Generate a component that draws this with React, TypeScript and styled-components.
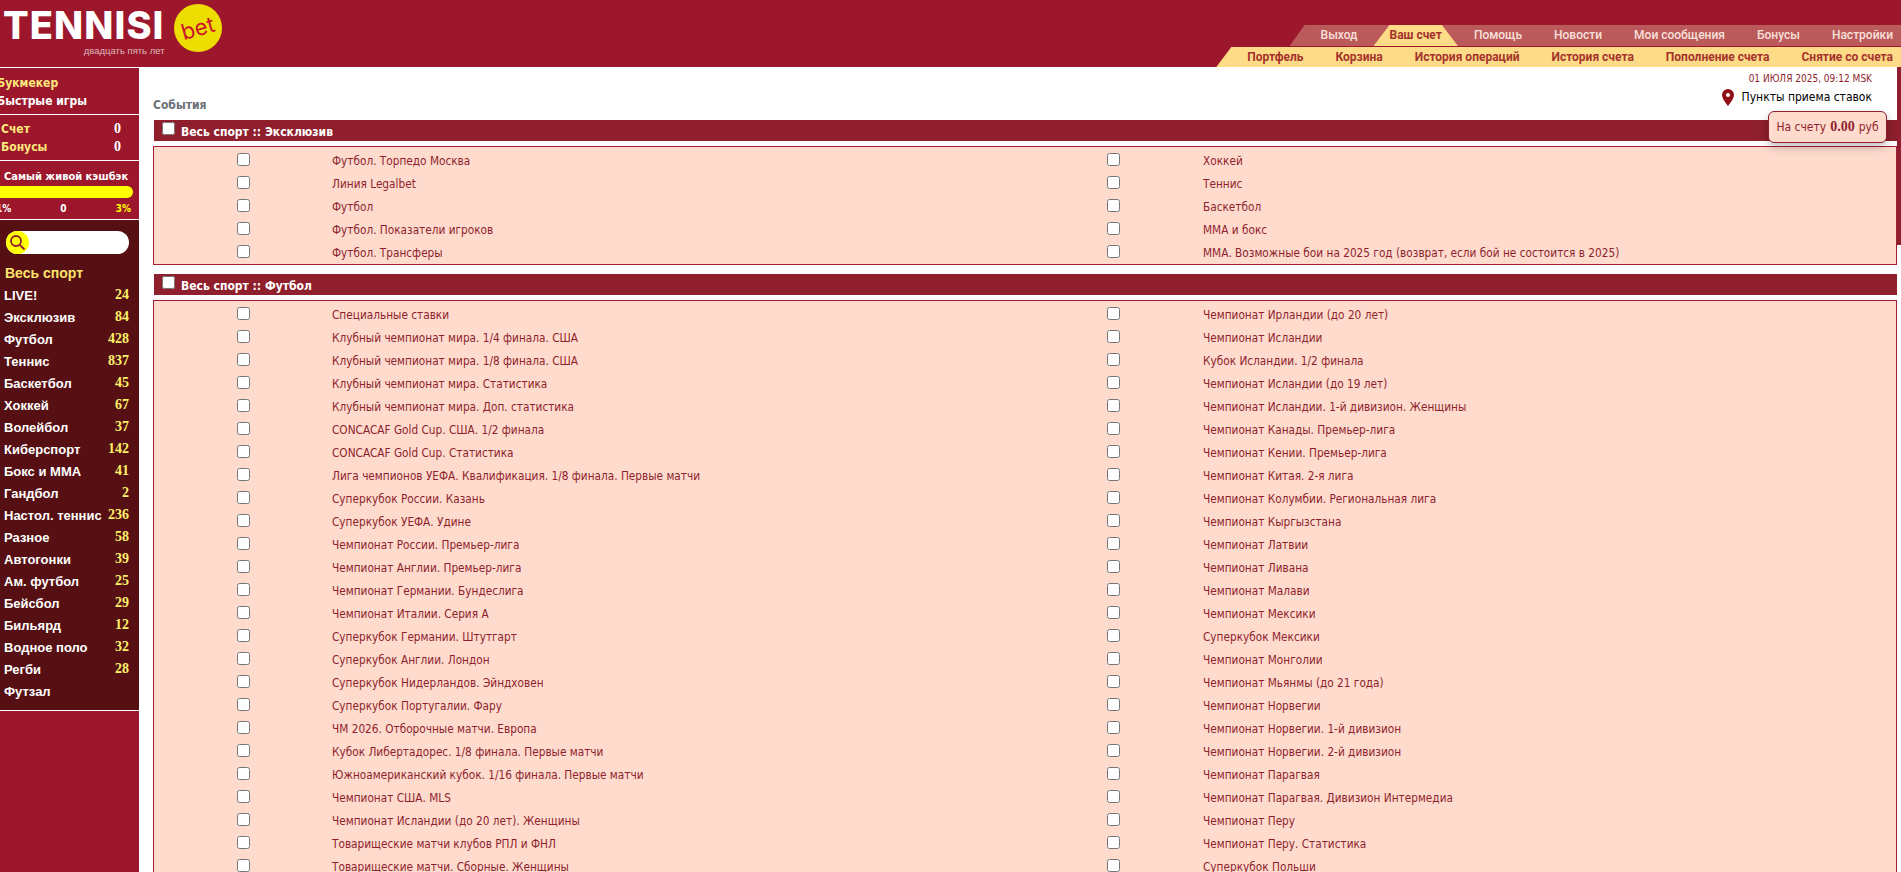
import { Fragment } from "react"
import styled, { createGlobalStyle } from "styled-components"

const GlobalStyle = createGlobalStyle`
    html, body {
        margin: 0;
        padding: 0;
        height: 100%;
        overflow: hidden;
        background: #fff;
    }
    * {
        box-sizing: border-box;
    }
`

const body = `"DejaVu Sans", "Liberation Sans", sans-serif`
const arial = `"Liberation Sans", Arial, sans-serif`

const Page = styled.div`
    width: 1901px;
    height: 872px;
    overflow: hidden;
    position: relative;
    display: flex;
    flex-direction: column;
`

const Header = styled.header`
    height: 67px;
    flex: none;
    background: #9c172b;
    display: flex;
    justify-content: space-between;
    align-items: flex-end;
`

const Logo = styled.div`
    align-self: flex-start;
    display: flex;
    padding: 4px 0 0 3px;
    gap: 9px;
`

const LogoWords = styled.div`
    display: flex;
    flex-direction: column;
    align-items: flex-end;
`

const LogoName = styled.div`
    font-family: Inter, ${arial};
    font-weight: 800;
    font-size: 38px;
    line-height: 42px;
    letter-spacing: 1.1px;
    color: #fff;
`

const LogoSlogan = styled.div`
    font-family: ${arial};
    font-size: 9.5px;
    line-height: 10px;
    color: #dcb9bd;
`

const LogoBadge = styled.div`
    width: 48px;
    height: 48px;
    border-radius: 50%;
    background: #eedd00;
    display: flex;
    align-items: center;
    justify-content: center;
`

const LogoBet = styled.span`
    font-family: Inter, ${arial};
    font-size: 22px;
    line-height: 22px;
    font-weight: 400;
    color: #c8142c;
    transform: rotate(-16deg);
`

const Nav = styled.nav`
    display: flex;
    flex-direction: column;
    align-items: flex-end;
    gap: 1px;
`

const TabBar = styled.div<{ $sub?: boolean }>`
    display: flex;
    height: ${p => (p.$sub ? "20px" : "21px")};
    padding-left: 15px;
    background: ${p => (p.$sub ? "#fedb87" : "#bb5a5b")};
    clip-path: polygon(15px 0, 100% 0, 100% 100%, 0 100%);
`

const Tab = styled.div<{ $sub?: boolean; $active?: boolean }>`
    padding: 0 16px;
    font-family: Roboto, ${arial};
    font-size: 12px;
    font-weight: ${p => (p.$sub || p.$active ? 700 : 500)};
    line-height: 21px;
    white-space: nowrap;
    color: ${p => (p.$sub || p.$active ? "#a5332d" : "#f9e0da")};
    background: ${p => (p.$active ? "#fedb87" : "transparent")};
    clip-path: ${p => (p.$active ? "polygon(16px 0, calc(100% - 16px) 0, 100% 100%, 0 100%)" : "none")};
    &:last-child {
        padding-right: 8px;
    }
`

const Content = styled.div`
    flex: 1;
    display: flex;
    min-height: 0;
`

const Sidebar = styled.aside`
    width: 139px;
    flex: none;
    background: #9c172b;
    padding-top: 1px;
    display: flex;
    flex-direction: column;
    box-shadow: inset 0 1px 0 #fff;
`

const SideBlock = styled.div<{ $height: number; $dark?: boolean }>`
    height: ${p => p.$height}px;
    flex: none;
    border-bottom: 1px solid #fff;
    background: ${p => (p.$dark ? "#560f12" : "transparent")};
    overflow: hidden;
`

const SideLine = styled.div<{ $white?: boolean; $clipped?: boolean }>`
    display: flex;
    justify-content: space-between;
    height: 18px;
    margin-left: ${p => (p.$clipped ? "-3px" : "0")};
    padding-right: 18px;
    font-family: ${body};
    font-stretch: condensed;
    font-size: 12px;
    font-weight: 700;
    line-height: 18px;
    color: ${p => (p.$white ? "#fff" : "#fde97d")};
`

const SideValue = styled.span`
    color: #fff;
    font-family: "Liberation Serif", serif;
    font-size: 14px;
`

const MenuBlock = styled.div`
    padding-top: 6px;
`

const AccountBlock = styled.div`
    padding: 5px 0 0 1px;
`

const CashbackTitle = styled.div`
    font-family: ${body};
    font-stretch: condensed;
    font-size: 11px;
    font-weight: 700;
    color: #fff;
    line-height: 14px;
    padding: 9px 0 2px 4px;
    white-space: nowrap;
`

const CashbackBar = styled.div`
    height: 12px;
    width: 140px;
    margin-left: -7px;
    background: #ffff00;
    border-radius: 6px;
`

const CashbackScale = styled.div`
    display: flex;
    justify-content: space-between;
    padding: 4px 8px 0 0;
    margin-left: -4px;
    font-family: ${body};
    font-stretch: condensed;
    font-size: 10px;
    font-weight: 700;
    line-height: 14px;
    color: #fff;
`

const ScaleMax = styled.span`
    color: #ffff00;
`

const Search = styled.div`
    width: 123px;
    height: 23px;
    margin: 11px 0 0 6px;
    background: #fff;
    border-radius: 12px;
`

const SearchIcon = styled.div`
    width: 23px;
    height: 23px;
    border-radius: 50%;
    background: #ffff00;
    display: flex;
    align-items: center;
    justify-content: center;
`

const AllSports = styled.div`
    margin: 8px 0 0 5px;
    height: 22px;
    font-family: ${arial};
    font-size: 14px;
    font-weight: 700;
    line-height: 22px;
    color: #fbe36e;
`

const SportRow = styled.div`
    height: 22px;
    padding: 0 10px 0 4px;
    display: flex;
    align-items: center;
    justify-content: space-between;
    font-family: ${arial};
    font-size: 13px;
    font-weight: 700;
    color: #fff;
`

const SportCount = styled.span`
    font-family: "Liberation Serif", serif;
    font-size: 14px;
    color: #fdf06a;
`

const Main = styled.main`
    flex: 1;
    min-width: 0;
    padding: 0 4px 0 14px;
`

const MainTop = styled.div`
    height: 53px;
    display: flex;
    justify-content: space-between;
`

const PageTitle = styled.div`
    align-self: flex-end;
    padding-bottom: 7px;
    font-family: ${body};
    font-stretch: condensed;
    font-size: 12px;
    font-weight: 700;
    line-height: 15px;
    color: #6c7077;
`

const TopInfo = styled.div`
    display: flex;
    flex-direction: column;
    align-items: flex-end;
    padding: 5px 25px 0 0;
`

const DateText = styled.div`
    font-family: ${body};
    font-stretch: condensed;
    font-size: 10px;
    line-height: 13px;
    color: #8f1f2d;
`

const PointsLink = styled.div`
    display: flex;
    align-items: center;
    gap: 8px;
    margin-top: 2px;
    font-family: ${body};
    font-stretch: condensed;
    font-size: 12px;
    line-height: 20px;
    color: #000;
`

const SectionHead = styled.div`
    height: 21px;
    margin: 0 0 5px 1px;
    padding: 2px 0 0 8px;
    background: #8f1f2d;
    display: flex;
    align-items: center;
    gap: 6px;
    font-family: ${body};
    font-stretch: condensed;
    font-size: 12px;
    font-weight: 700;
    color: #fff;
`

const Panel = styled.div`
    display: grid;
    grid-template-columns: 178px 692px 179px 1fr;
    grid-auto-rows: 23px;
    padding: 1px 0 1px;
    margin-bottom: 9px;
    border: 1px solid #a01f35;
    background: #fedbcd;
`

const CheckCell = styled.div`
    display: flex;
    align-items: center;
    justify-content: center;
`

const Check = styled.input.attrs({ type: "checkbox" })`
    width: 13px;
    height: 13px;
    margin: 0;
`

const HeadCheck = styled(Check)`
    position: relative;
    top: -3px;
`

const EventLabel = styled.div`
    display: flex;
    align-items: center;
    padding-top: 2px;
    font-family: ${body};
    font-stretch: condensed;
    font-size: 11.72px;
    color: #8f1f2d;
    white-space: nowrap;
`

const SideStrip = styled.div`
    position: absolute;
    top: 67px;
    right: 0;
    width: 4px;
    height: 178px;
    background: #8f1f2d;
`

const Balance = styled.div`
    position: absolute;
    top: 111px;
    left: 1768px;
    width: 119px;
    height: 32px;
    border: 1px solid #8f1f2d;
    border-radius: 6px;
    background: #fedbcd;
    box-shadow: 0 4px 10px rgba(0, 0, 0, 0.25);
    display: flex;
    align-items: center;
    justify-content: center;
    gap: 4px;
    font-family: ${body};
    font-stretch: condensed;
    font-size: 12px;
    color: #8f1f2d;
    white-space: nowrap;
`

const BalanceValue = styled.b`
    font-family: "Liberation Serif", serif;
    font-size: 14px;
`

const topTabs = ["Выход", "Ваш счет", "Помощь", "Новости", "Мои сообщения", "Бонусы", "Настройки"]
const subTabs = ["Портфель", "Корзина", "История операций", "История счета", "Пополнение счета", "Снятие со счета"]

const sports: [string, number | null][] = [
    ["LIVE!", 24], ["Эксклюзив", 84], ["Футбол", 428], ["Теннис", 837], ["Баскетбол", 45],
    ["Хоккей", 67], ["Волейбол", 37], ["Киберспорт", 142], ["Бокс и ММА", 41], ["Гандбол", 2],
    ["Настол. теннис", 236], ["Разное", 58], ["Автогонки", 39], ["Ам. футбол", 25], ["Бейсбол", 29],
    ["Бильярд", 12], ["Водное поло", 32], ["Регби", 28], ["Футзал", null],
]

const exclusive: [string, string][] = [
    ["Футбол. Торпедо Москва", "Хоккей"],
    ["Линия Legalbet", "Теннис"],
    ["Футбол", "Баскетбол"],
    ["Футбол. Показатели игроков", "ММА и бокс"],
    ["Футбол. Трансферы", "ММА. Возможные бои на 2025 год (возврат, если бой не состоится в 2025)"],
]

const football: [string, string][] = [
    ["Специальные ставки", "Чемпионат Ирландии (до 20 лет)"],
    ["Клубный чемпионат мира. 1/4 финала. США", "Чемпионат Исландии"],
    ["Клубный чемпионат мира. 1/8 финала. США", "Кубок Исландии. 1/2 финала"],
    ["Клубный чемпионат мира. Статистика", "Чемпионат Исландии (до 19 лет)"],
    ["Клубный чемпионат мира. Доп. статистика", "Чемпионат Исландии. 1-й дивизион. Женщины"],
    ["CONCACAF Gold Cup. США. 1/2 финала", "Чемпионат Канады. Премьер-лига"],
    ["CONCACAF Gold Cup. Статистика", "Чемпионат Кении. Премьер-лига"],
    ["Лига чемпионов УЕФА. Квалификация. 1/8 финала. Первые матчи", "Чемпионат Китая. 2-я лига"],
    ["Суперкубок России. Казань", "Чемпионат Колумбии. Региональная лига"],
    ["Суперкубок УЕФА. Удине", "Чемпионат Кыргызстана"],
    ["Чемпионат России. Премьер-лига", "Чемпионат Латвии"],
    ["Чемпионат Англии. Премьер-лига", "Чемпионат Ливана"],
    ["Чемпионат Германии. Бундеслига", "Чемпионат Малави"],
    ["Чемпионат Италии. Серия А", "Чемпионат Мексики"],
    ["Суперкубок Германии. Штутгарт", "Суперкубок Мексики"],
    ["Суперкубок Англии. Лондон", "Чемпионат Монголии"],
    ["Суперкубок Нидерландов. Эйндховен", "Чемпионат Мьянмы (до 21 года)"],
    ["Суперкубок Португалии. Фару", "Чемпионат Норвегии"],
    ["ЧМ 2026. Отборочные матчи. Европа", "Чемпионат Норвегии. 1-й дивизион"],
    ["Кубок Либертадорес. 1/8 финала. Первые матчи", "Чемпионат Норвегии. 2-й дивизион"],
    ["Южноамериканский кубок. 1/16 финала. Первые матчи", "Чемпионат Парагвая"],
    ["Чемпионат США. MLS", "Чемпионат Парагвая. Дивизион Интермедиа"],
    ["Чемпионат Исландии (до 20 лет). Женщины", "Чемпионат Перу"],
    ["Товарищеские матчи клубов РПЛ и ФНЛ", "Чемпионат Перу. Статистика"],
    ["Товарищеские матчи. Сборные. Женщины", "Суперкубок Польши"],
]

const Section: React.FC<{ title: string; rows: [string, string][] }> = ({ title, rows }) => (
    <>
        <SectionHead>
            <HeadCheck />
            {title}
        </SectionHead>
        <Panel>
            {rows.map(([left, right]) => (
                <Fragment key={left}>
                    <CheckCell><Check /></CheckCell>
                    <EventLabel>{left}</EventLabel>
                    <CheckCell><Check /></CheckCell>
                    <EventLabel>{right}</EventLabel>
                </Fragment>
            ))}
        </Panel>
    </>
)

const App: React.FC = () => {
    return (
        <Page>
            <GlobalStyle />
            <Header>
                <Logo>
                    <LogoWords>
                        <LogoName>TENNISI</LogoName>
                        <LogoSlogan>двадцать пять лет</LogoSlogan>
                    </LogoWords>
                    <LogoBadge><LogoBet>bet</LogoBet></LogoBadge>
                </Logo>
                <Nav>
                    <TabBar>
                        {topTabs.map(t => <Tab key={t} $active={t === "Ваш счет"}>{t}</Tab>)}
                    </TabBar>
                    <TabBar $sub>
                        {subTabs.map(t => <Tab key={t} $sub>{t}</Tab>)}
                    </TabBar>
                </Nav>
            </Header>
            <Content>
                <Sidebar>
                    <SideBlock $height={47}>
                        <MenuBlock>
                            <SideLine $clipped>Букмекер</SideLine>
                            <SideLine $clipped $white>Быстрые игры</SideLine>
                        </MenuBlock>
                    </SideBlock>
                    <SideBlock $height={46}>
                        <AccountBlock>
                            <SideLine>Счет <SideValue>0</SideValue></SideLine>
                            <SideLine>Бонусы <SideValue>0</SideValue></SideLine>
                        </AccountBlock>
                    </SideBlock>
                    <SideBlock $height={59}>
                        <CashbackTitle>Самый живой кэшбэк</CashbackTitle>
                        <CashbackBar />
                        <CashbackScale>
                            <span>1%</span>
                            <span>0</span>
                            <ScaleMax>3%</ScaleMax>
                        </CashbackScale>
                    </SideBlock>
                    <SideBlock $height={491} $dark>
                        <Search>
                            <SearchIcon>
                                <svg width="17" height="17" viewBox="0 0 17 17" fill="none" stroke="#8f1f2d" strokeWidth="1.8">
                                    <circle cx="7" cy="7" r="5" />
                                    <path d="M10.8 10.8 L15.5 15.5" />
                                </svg>
                            </SearchIcon>
                        </Search>
                        <AllSports>Весь спорт</AllSports>
                        {sports.map(([name, count]) => (
                            <SportRow key={name}>
                                {name}
                                <SportCount>{count}</SportCount>
                            </SportRow>
                        ))}
                    </SideBlock>
                </Sidebar>
                <Main>
                    <MainTop>
                        <PageTitle>События</PageTitle>
                        <TopInfo>
                            <DateText>01 ИЮЛЯ 2025, 09:12 MSK</DateText>
                            <PointsLink>
                                <svg width="12" height="17" viewBox="0 0 12 17">
                                    <path fill="#8f0f14" fillRule="evenodd" d="M6 0a6 6 0 0 0-6 6c0 4 6 11 6 11s6-7 6-11a6 6 0 0 0-6-6zm0 4a2 2 0 1 1 0 4 2 2 0 0 1 0-4z" />
                                </svg>
                                Пункты приема ставок
                            </PointsLink>
                        </TopInfo>
                    </MainTop>
                    <Section title="Весь спорт :: Эксклюзив" rows={exclusive} />
                    <Section title="Весь спорт :: Футбол" rows={football} />
                </Main>
            </Content>
            <SideStrip />
            <Balance>На счету <BalanceValue>0.00</BalanceValue> руб</Balance>
        </Page>
    )
}

export default App
